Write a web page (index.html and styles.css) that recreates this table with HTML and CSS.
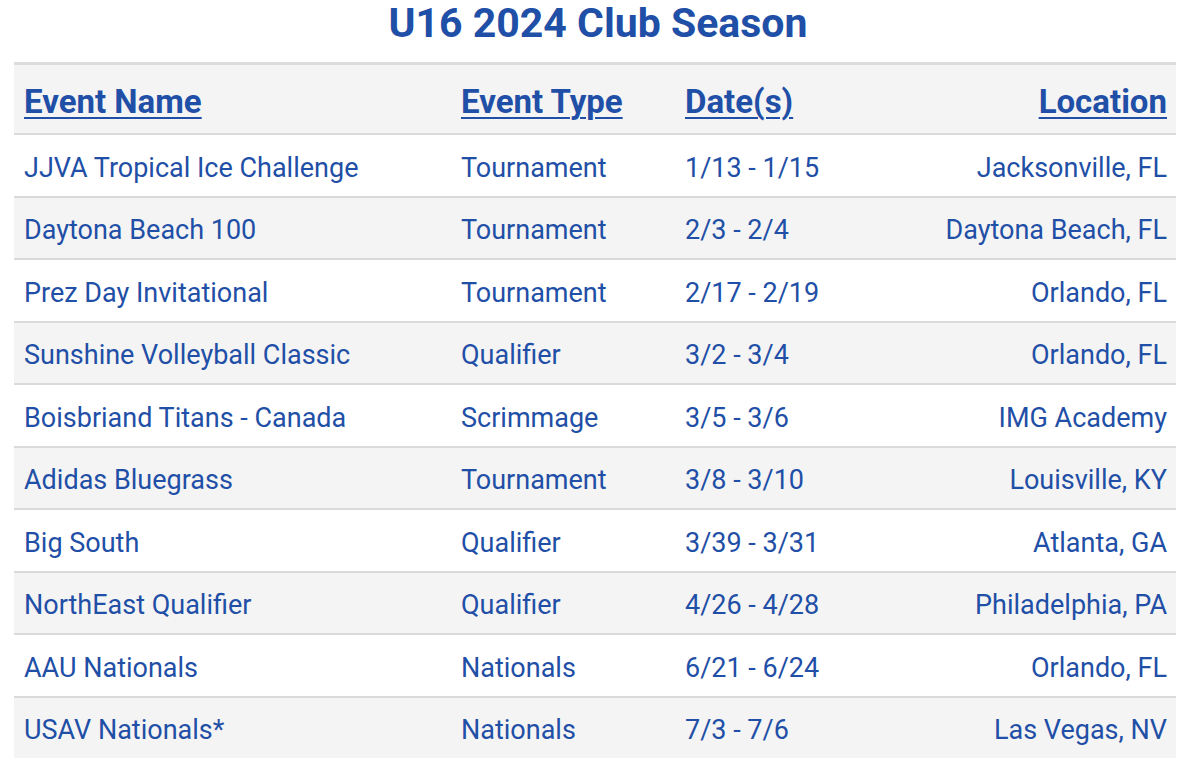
FILE: index.html
```html
<!DOCTYPE html>
<html>
<head>
<meta charset="utf-8">
<link rel="stylesheet" href="styles.css">
</head>
<body>
<h1 class="title">U16 2024 Club Season</h1>
<table class="schedule">
  <thead>
    <tr>
      <th class="c-name"><a href="#">Event Name</a></th>
      <th class="c-type"><a href="#">Event Type</a></th>
      <th class="c-date"><a href="#">Date(s)</a></th>
      <th class="c-loc"><a href="#">Location</a></th>
    </tr>
  </thead>
  <tbody>
    <tr><td>JJVA Tropical Ice Challenge</td><td>Tournament</td><td>1/13 - 1/15</td><td class="c-loc">Jacksonville, FL</td></tr>
    <tr><td>Daytona Beach 100</td><td>Tournament</td><td>2/3 - 2/4</td><td class="c-loc">Daytona Beach, FL</td></tr>
    <tr><td>Prez Day Invitational</td><td>Tournament</td><td>2/17 - 2/19</td><td class="c-loc">Orlando, FL</td></tr>
    <tr><td>Sunshine Volleyball Classic</td><td>Qualifier</td><td>3/2 - 3/4</td><td class="c-loc">Orlando, FL</td></tr>
    <tr><td>Boisbriand Titans - Canada</td><td>Scrimmage</td><td>3/5 - 3/6</td><td class="c-loc">IMG Academy</td></tr>
    <tr><td>Adidas Bluegrass</td><td>Tournament</td><td>3/8 - 3/10</td><td class="c-loc">Louisville, KY</td></tr>
    <tr><td>Big South</td><td>Qualifier</td><td>3/39 - 3/31</td><td class="c-loc">Atlanta, GA</td></tr>
    <tr><td>NorthEast Qualifier</td><td>Qualifier</td><td>4/26 - 4/28</td><td class="c-loc">Philadelphia, PA</td></tr>
    <tr><td>AAU Nationals</td><td>Nationals</td><td>6/21 - 6/24</td><td class="c-loc">Orlando, FL</td></tr>
    <tr><td>USAV Nationals*</td><td>Nationals</td><td>7/3 - 7/6</td><td class="c-loc">Las Vegas, NV</td></tr>
  </tbody>
</table>
</body>
</html>
```
FILE: styles.css
```css
html, body {
  margin: 0;
  padding: 0;
  background: #ffffff;
}
body {
  font-family: Roboto, "Liberation Sans", sans-serif;
  color: #1f4fa6;
  padding: 0 24px 0 14px;
}
.title {
  margin: 0;
  height: 62px;
  line-height: 46px;
  text-align: center;
  font-size: 41px;
  font-weight: 700;
  color: #1f4fa6;
  padding-left: 6px;
}
.schedule {
  width: 1162px;
  border-collapse: collapse;
  border-top: 3px solid #dcdcdc;
}
.schedule th {
  background: #f4f4f4;
  height: 63px;
  padding: 5px 9px 0 10px;
  text-align: left;
  font-size: 33px;
  font-weight: 700;
  border-bottom: 2px solid #dadada;
}
.schedule th a {
  color: #1f4fa6;
  text-decoration: underline;
  text-decoration-thickness: 2px;
  text-underline-offset: 4px;
}
.schedule td {
  height: 55.5px;
  padding: 5px 9px 0 10px;
  font-size: 27px;
  border-bottom: 2px solid #dadada;
}
.schedule tbody tr:nth-child(even) td {
  background: #f4f4f4;
}
.schedule tbody tr:last-child td {
  border-bottom: none;
}
.c-name { width: 418px; }
.c-type { width: 205px; }
.c-date { width: 200px; }
.schedule .c-loc { text-align: right; }
```
